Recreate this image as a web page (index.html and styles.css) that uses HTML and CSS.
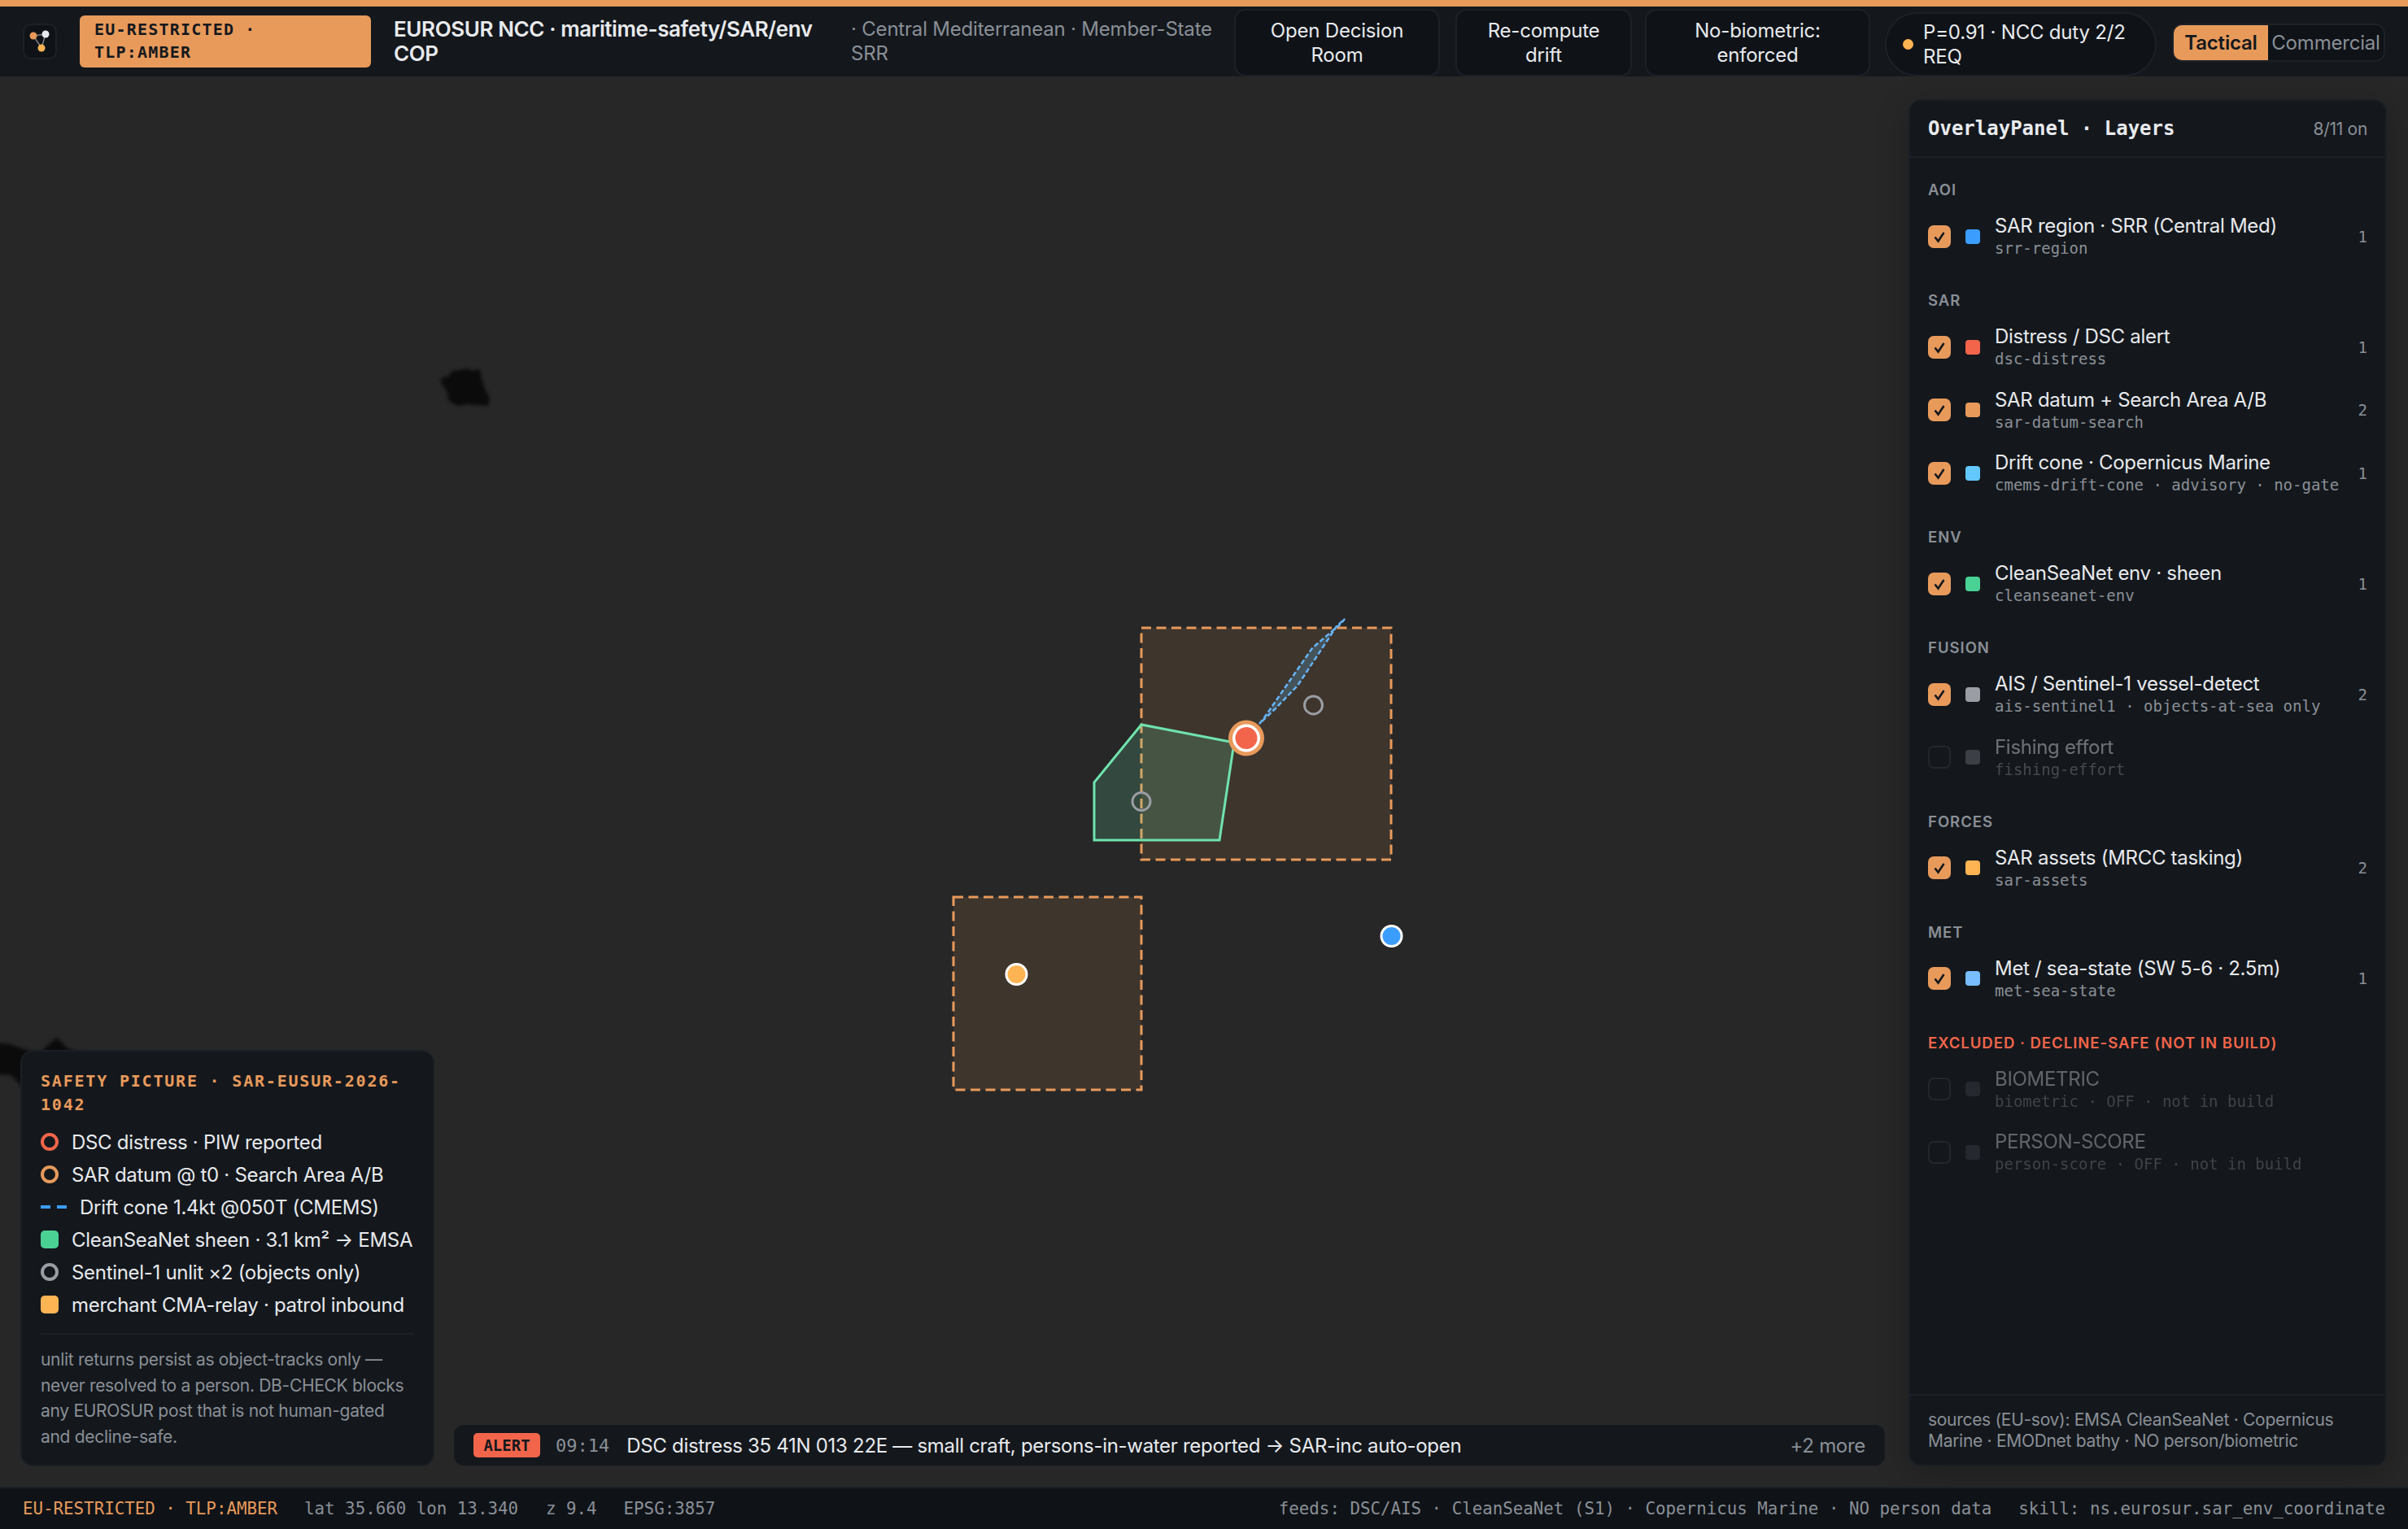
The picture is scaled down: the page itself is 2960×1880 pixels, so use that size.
FILE: index.html
```html
<!DOCTYPE html>
<html lang="en">
<head>
<meta charset="utf-8">
<title>EUROSUR NCC COP</title>
<link rel="stylesheet" href="styles.css">
</head>
<body>
<div class="app">
  <div class="accent"></div>
  <header class="topbar">
    <div class="logo">
      <svg width="42" height="44" viewBox="0 0 42 44">
        <path d="M13 15 L28 13 M13 15 L23 30 L28 13" fill="none" stroke="#7d8186" stroke-width="1.5"/>
        <circle cx="13" cy="15" r="4.5" fill="#e89a5b"/>
        <circle cx="28" cy="13" r="4.5" fill="#e8eaed"/>
        <circle cx="23" cy="30" r="4.5" fill="#ffb454"/>
      </svg>
    </div>
    <div class="badge">EU-RESTRICTED · TLP:AMBER</div>
    <div class="title">EUROSUR NCC · maritime-safety/SAR/env COP</div>
    <div class="subtitle">· Central Mediterranean · Member-State SRR</div>
    <button class="btn btn-a">Open Decision Room</button>
    <button class="btn btn-b">Re-compute drift</button>
    <button class="btn btn-c">No-biometric: enforced</button>
    <div class="pill"><span class="pill-dot"></span><span>P=0.91 · NCC duty 2/2 REQ</span></div>
    <div class="toggle"><span class="tog tog-on">Tactical</span><span class="tog">Commercial</span></div>
  </header>

  <main class="map">
    <svg class="map-svg" width="2960" height="1734" viewBox="0 94 2960 1734">
      <path class="land" d="M541 466 L552 462 L556 456 L566 455 L574 453 L580 456 L590 454 L592 466 L596 478 L602 490 L600 499 L588 498 L575 497 L562 499 L552 493 L549 480 L543 472 Z"/>
      <path class="land" d="M-10 1282 L12 1284 L30 1290 L48 1296 L60 1284 L70 1276 L84 1290 L110 1296 L110 1350 L30 1340 L14 1322 L-10 1320 Z"/>
      <rect class="sa" x="1403" y="772" width="307" height="285"/>
      <rect class="sa" x="1172" y="1103" width="231" height="237"/>
      <polygon class="sheen" points="1403,891 1345,962 1345,1033 1499,1033 1517,913"/>
      <path class="cone" d="M1548 890 L1553 884 L1613 797 L1627 785 L1647 768 L1653 761 L1643 770 L1595 843 L1567 872 Z"/>
      <circle class="unlit" cx="1614.5" cy="867" r="11"/>
      <circle class="unlit" cx="1403" cy="985.5" r="11"/>
      <circle cx="1532" cy="907.5" r="22" fill="#e89a5b"/>
      <circle cx="1532" cy="907.5" r="17" fill="#fff"/>
      <circle cx="1532" cy="907.5" r="13.5" fill="#f2654a"/>
      <circle class="dot" cx="1249.5" cy="1198" r="12.5" fill="#ffb454"/>
      <circle class="dot" cx="1710.5" cy="1151" r="12.5" fill="#3b9eff"/>
    </svg>

    <aside class="panel">
      <div class="panel-head">
        <span class="panel-title">OverlayPanel · Layers</span>
        <span class="panel-count">8/11 on</span>
      </div>
      <div class="panel-body">
        <section class="group">
          <h3 class="group-label">AOI</h3>
          <div class="row">
            <span class="cb cb-on"><svg viewBox="0 0 28 28"><path d="M8.5 14.5 L12.5 19.5 L19.5 9"/></svg></span>
            <span class="sw sw-blue"></span>
            <div class="row-text"><div class="row-title">SAR region · SRR (Central Med)</div><div class="row-sub">srr-region</div></div>
            <span class="row-n">1</span>
          </div>
        </section>
        <section class="group">
          <h3 class="group-label">SAR</h3>
          <div class="row">
            <span class="cb cb-on"><svg viewBox="0 0 28 28"><path d="M8.5 14.5 L12.5 19.5 L19.5 9"/></svg></span>
            <span class="sw sw-red"></span>
            <div class="row-text"><div class="row-title">Distress / DSC alert</div><div class="row-sub">dsc-distress</div></div>
            <span class="row-n">1</span>
          </div>
          <div class="row">
            <span class="cb cb-on"><svg viewBox="0 0 28 28"><path d="M8.5 14.5 L12.5 19.5 L19.5 9"/></svg></span>
            <span class="sw sw-orange"></span>
            <div class="row-text"><div class="row-title">SAR datum + Search Area A/B</div><div class="row-sub">sar-datum-search</div></div>
            <span class="row-n">2</span>
          </div>
          <div class="row">
            <span class="cb cb-on"><svg viewBox="0 0 28 28"><path d="M8.5 14.5 L12.5 19.5 L19.5 9"/></svg></span>
            <span class="sw sw-sky"></span>
            <div class="row-text"><div class="row-title">Drift cone · Copernicus Marine</div><div class="row-sub">cmems-drift-cone · advisory · no-gate</div></div>
            <span class="row-n">1</span>
          </div>
        </section>
        <section class="group">
          <h3 class="group-label">ENV</h3>
          <div class="row">
            <span class="cb cb-on"><svg viewBox="0 0 28 28"><path d="M8.5 14.5 L12.5 19.5 L19.5 9"/></svg></span>
            <span class="sw sw-green"></span>
            <div class="row-text"><div class="row-title">CleanSeaNet env · sheen</div><div class="row-sub">cleanseanet-env</div></div>
            <span class="row-n">1</span>
          </div>
        </section>
        <section class="group">
          <h3 class="group-label">FUSION</h3>
          <div class="row">
            <span class="cb cb-on"><svg viewBox="0 0 28 28"><path d="M8.5 14.5 L12.5 19.5 L19.5 9"/></svg></span>
            <span class="sw sw-grey"></span>
            <div class="row-text"><div class="row-title">AIS / Sentinel-1 vessel-detect</div><div class="row-sub">ais-sentinel1 · objects-at-sea only</div></div>
            <span class="row-n">2</span>
          </div>
          <div class="row row-off">
            <span class="cb"></span>
            <span class="sw sw-grey"></span>
            <div class="row-text"><div class="row-title">Fishing effort</div><div class="row-sub">fishing-effort</div></div>
          </div>
        </section>
        <section class="group">
          <h3 class="group-label">FORCES</h3>
          <div class="row">
            <span class="cb cb-on"><svg viewBox="0 0 28 28"><path d="M8.5 14.5 L12.5 19.5 L19.5 9"/></svg></span>
            <span class="sw sw-amber"></span>
            <div class="row-text"><div class="row-title">SAR assets (MRCC tasking)</div><div class="row-sub">sar-assets</div></div>
            <span class="row-n">2</span>
          </div>
        </section>
        <section class="group">
          <h3 class="group-label">MET</h3>
          <div class="row">
            <span class="cb cb-on"><svg viewBox="0 0 28 28"><path d="M8.5 14.5 L12.5 19.5 L19.5 9"/></svg></span>
            <span class="sw sw-ice"></span>
            <div class="row-text"><div class="row-title">Met / sea-state (SW 5-6 · 2.5m)</div><div class="row-sub">met-sea-state</div></div>
            <span class="row-n">1</span>
          </div>
        </section>
        <section class="group">
          <h3 class="group-label group-label-red">EXCLUDED · DECLINE-SAFE (NOT IN BUILD)</h3>
          <div class="row row-off row-ex">
            <span class="cb"></span>
            <span class="sw sw-dim"></span>
            <div class="row-text"><div class="row-title">BIOMETRIC</div><div class="row-sub">biometric · OFF · not in build</div></div>
          </div>
          <div class="row row-off row-ex">
            <span class="cb"></span>
            <span class="sw sw-dim"></span>
            <div class="row-text"><div class="row-title">PERSON-SCORE</div><div class="row-sub">person-score · OFF · not in build</div></div>
          </div>
        </section>
      </div>
      <div class="panel-foot">sources (EU-sov): EMSA CleanSeaNet · Copernicus Marine · EMODnet bathy · NO person/biometric</div>
    </aside>

    <aside class="legend">
      <div class="legend-title">SAFETY PICTURE · SAR-EUSUR-2026-1042</div>
      <ul class="legend-list">
        <li class="legend-item"><span class="ico ico-ring ring-red"></span>DSC distress · PIW reported</li>
        <li class="legend-item"><span class="ico ico-ring ring-orange"></span>SAR datum @ t0 · Search Area A/B</li>
        <li class="legend-item"><span class="ico-dash"><i></i><i></i></span>Drift cone 1.4kt @050T (CMEMS)</li>
        <li class="legend-item"><span class="ico ico-sq sq-green"></span>CleanSeaNet sheen · 3.1 km² → EMSA</li>
        <li class="legend-item"><span class="ico ico-ring ring-grey"></span>Sentinel-1 unlit ×2 (objects only)</li>
        <li class="legend-item"><span class="ico ico-sq sq-amber"></span>merchant CMA-relay · patrol inbound</li>
      </ul>
      <p class="legend-note">unlit returns persist as object-tracks only — never resolved to a person. DB-CHECK blocks any EUROSUR post that is not human-gated and decline-safe.</p>
    </aside>

    <div class="alert">
      <span class="alert-tag">ALERT</span>
      <span class="alert-time">09:14</span>
      <span class="alert-text">DSC distress 35 41N 013 22E — small craft, persons-in-water reported → SAR-inc auto-open</span>
      <span class="alert-more">+2 more</span>
    </div>
  </main>

  <footer class="status">
    <span class="st-class">EU-RESTRICTED · TLP:AMBER</span>
    <span class="st-a">lat 35.660 lon 13.340</span>
    <span class="st-b">z 9.4</span>
    <span class="st-b">EPSG:3857</span>
    <span class="st-feeds">feeds: DSC/AIS · CleanSeaNet (S1) · Copernicus Marine · NO person data</span>
    <span class="st-skill">skill: ns.eurosur.sar_env_coordinate</span>
  </footer>
</div>
</body>
</html>
```

FILE: styles.css
```css
* { box-sizing: border-box; }
html, body { margin: 0; padding: 0; }
body {
  width: 2960px;
  height: 1880px;
  overflow: hidden;
  background: #272727;
  color: #e8eaed;
  font-family: Inter, "Liberation Sans", sans-serif;
  font-size: 24px;
}
.app { display: flex; flex-direction: column; height: 1880px; }
.accent { height: 8px; background: #e89a5b; flex: none; }

.topbar {
  flex: none;
  height: 86px;
  background: #14181d;
  display: flex;
  align-items: center;
  padding: 0 28px;
}
.logo {
  width: 42px; height: 44px; flex: none;
  background: #0f1318;
  border: 2px solid #1c2128;
  border-radius: 10px;
  overflow: hidden;
  display: flex;
  margin-right: 28px;
}
.logo svg { margin: -2px; flex: none; }
.badge {
  width: 358px; height: 64px; flex: none;
  background: #e89a5b;
  color: #14181d;
  border-radius: 6px;
  padding: 3px 18px;
  font-family: "DejaVu Sans Mono", monospace;
  font-size: 20px;
  font-weight: 600;
  letter-spacing: 1.2px;
  line-height: 28px;
  margin-right: 28px;
}
.title {
  width: 540px; flex: none;
  font-size: 26px; font-weight: 600; line-height: 30px;
  letter-spacing: -0.4px;
  margin-right: 22px;
}
.subtitle {
  width: 450px; flex: none;
  font-size: 24px; line-height: 30px; color: #8a8f96;
  letter-spacing: -0.2px;
  margin-right: 21px;
}
.btn {
  height: 83px; flex: none; margin-top: 3px;
  background: #0f1318;
  border: 2px solid #1c2128;
  border-radius: 14px;
  color: #e8eaed;
  font: inherit;
  line-height: 30px;
  padding: 0 24px;
  letter-spacing: -0.2px;
  margin-right: 19px;
}
.btn-a { width: 253px; }
.btn-b { width: 217px; margin-right: 16px; }
.btn-c { width: 277px; margin-right: 18px; }
.pill {
  width: 334px; height: 79px; flex: none; margin-top: 7px;
  background: #0f1318;
  border: 2px solid #1c2128;
  border-radius: 40px;
  display: flex; align-items: center; gap: 12px;
  padding: 0 20px;
  line-height: 30px;
  letter-spacing: -0.2px;
  margin-right: 19px;
}
.pill-dot { width: 13px; height: 13px; flex: none; border-radius: 50%; background: #ffb454; }
.toggle {
  width: 262px; height: 47px; flex: none; margin-top: 2px;
  background: #0f1318;
  border: 2px solid #1c2128;
  border-radius: 12px;
  display: flex; overflow: hidden;
}
.tog {
  display: flex; align-items: center; justify-content: center;
  color: #8a8f96; flex: 1;
  font-size: 24px; letter-spacing: -0.2px;
}
.tog-on { flex: none; width: 116px; background: #e89a5b; color: #14181d; font-weight: 600; }

.map { position: relative; flex: 1; background: #272727; overflow: hidden; }
.map-svg { position: absolute; left: 0; top: 0; display: block; }
.land { fill: #0b0b0b; filter: blur(2px); }
.sa { fill: rgba(232,154,91,.12); stroke: #e89a5b; stroke-width: 3; stroke-dasharray: 12 6.5; }
.sheen { fill: rgba(111,227,173,.18); stroke: #6fe3ad; stroke-width: 3; stroke-linejoin: miter; }
.cone { fill: rgba(95,190,255,.22); stroke: #66b5f7; stroke-width: 2.5; stroke-dasharray: 6 3; }
.unlit { fill: none; stroke: #9a9da3; stroke-width: 3; }
.dot { stroke: #fff; stroke-width: 3; }

.panel {
  position: absolute; left: 2346px; top: 28px;
  width: 588px; height: 1681px;
  background: #14181d;
  border: 2px solid #1a1f25;
  border-radius: 16px;
  box-shadow: 0 10px 40px rgba(0,0,0,.22);
  display: flex; flex-direction: column;
}
.panel-head {
  flex: none; height: 70px;
  display: flex; align-items: center; justify-content: space-between;
  padding: 0 22px;
  border-bottom: 2px solid #1c2128;
}
.panel-title { font-family: "DejaVu Sans Mono", monospace; font-size: 24px; font-weight: 600; letter-spacing: 0; }
.panel-count { font-size: 21px; color: #8a8f96; letter-spacing: -0.3px; }
.panel-body { flex: 1; padding: 27px 22px 0; overflow: hidden; }
.group { margin-bottom: 27.75px; }
.group-label {
  margin: 0 0 6.75px;
  font-size: 18.5px; line-height: 24px; font-weight: 600;
  letter-spacing: 1px; color: #8a8f96;
}
.group-label-red { color: #f2654a; }
.row { display: flex; align-items: center; height: 77.5px; }
.cb {
  width: 28px; height: 28px; flex: none;
  border-radius: 7px;
  border: 2px solid #3a3f46;
}
.cb-on { background: #e89a5b; border: none; }
.cb svg { display: block; width: 28px; height: 28px; }
.cb path { fill: none; stroke: #14181d; stroke-width: 2.6; }
.sw { width: 18px; height: 18px; flex: none; border-radius: 4px; margin: 0 18px; }
.sw-blue { background: #3b9eff; }
.sw-red { background: #f2654a; }
.sw-orange { background: #e89a5b; }
.sw-sky { background: #63c8ff; }
.sw-green { background: #4ad295; }
.sw-grey { background: #9a9da3; }
.sw-amber { background: #ffb454; }
.sw-ice { background: #79bdff; }
.sw-dim { background: #3a3f46; }
.row-text { flex: 1; min-width: 0; }
.row-title { font-size: 24px; line-height: 30px; letter-spacing: -0.3px; white-space: nowrap; }
.row-sub { font-family: "DejaVu Sans Mono", monospace; font-size: 19px; line-height: 25px; color: #8a8f96; white-space: nowrap; }
.row-n { font-family: "DejaVu Sans Mono", monospace; font-size: 19px; color: #8a8f96; width: 14px; text-align: right; margin-left: 4px; flex: none; }
.row-off .cb, .row-off .sw, .row-off .row-text { opacity: .42; }
.row-off .sw { opacity: .3; }
.row-ex .row-text { opacity: .36; }
.row-ex .sw { opacity: .45; }
.panel-foot {
  flex: none; height: 87px;
  border-top: 2px solid #1c2128;
  padding: 17px 22px 0;
  font-size: 21px; line-height: 25.5px; color: #8a8f96; letter-spacing: -0.3px;
}

.legend {
  position: absolute; left: 25px; top: 1197px;
  width: 509px; height: 512px;
  background: #14181d;
  border: 2px solid #1a1f25;
  border-radius: 16px;
  padding: 22px 23px 0;
}
.legend-title {
  font-family: "DejaVu Sans Mono", monospace;
  font-size: 20px; font-weight: 600; line-height: 28.5px;
  letter-spacing: 1.8px; color: #e89a5b;
}
.legend-list { list-style: none; margin: 12px 0 0; padding: 0; }
.legend-item { display: flex; align-items: center; height: 40px; font-size: 24px; letter-spacing: -0.3px; white-space: nowrap; }
.ico { width: 22px; height: 22px; flex: none; margin-right: 16px; }
.ico-ring { border-radius: 50%; border: 4px solid; }
.ring-red { border-color: #f2654a; }
.ring-orange { border-color: #e89a5b; }
.ring-grey { border-color: #9a9da3; }
.ico-sq { border-radius: 5px; }
.sq-green { background: #4ad295; }
.sq-amber { background: #ffb454; }
.ico-dash { display: flex; gap: 8px; width: 32px; flex: none; margin-right: 16px; }
.ico-dash i { display: block; width: 12px; height: 4px; background: #3b9eff; }
.legend-note {
  margin: 15px 0 0; padding-top: 15px;
  border-top: 2px solid #1c2128;
  font-size: 21px; line-height: 31.5px; color: #8a8f96; letter-spacing: -0.3px;
}

.alert {
  position: absolute; left: 558px; top: 1658px;
  width: 1759px; height: 50px;
  background: #14181d;
  border-radius: 12px;
  display: flex; align-items: center;
  padding: 0 24px;
  white-space: nowrap;
}
.alert-tag {
  width: 82px; height: 30px; flex: none;
  background: #f2654a; color: #14181d; border-radius: 5px;
  font-family: "DejaVu Sans Mono", monospace; font-size: 19px; font-weight: 600;
  display: flex; align-items: center; justify-content: center;
  margin-right: 19px;
}
.alert-time { font-family: "DejaVu Sans Mono", monospace; font-size: 22px; color: #8a8f96; margin-right: 21px; }
.alert-text { font-size: 24px; letter-spacing: -0.3px; }
.alert-more { margin-left: auto; color: #8a8f96; letter-spacing: -0.3px; }

.status {
  flex: none; height: 52px;
  background: #0f1318;
  border-top: 2px solid #1c2128;
  display: flex; align-items: center;
  padding: 0 28px;
  font-family: "DejaVu Sans Mono", monospace;
  font-size: 20.8px;
  color: #8a8f96;
  white-space: nowrap;
}
.st-class { color: #e89a5b; margin-right: 33px; }
.st-a { margin-right: 34px; }
.st-b { margin-right: 33px; }
.st-feeds { margin-left: auto; margin-right: 33px; }
```
